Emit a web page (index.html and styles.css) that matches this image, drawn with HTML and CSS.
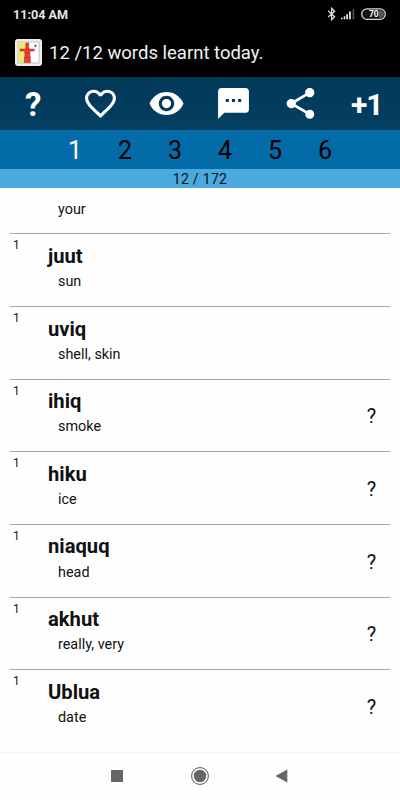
FILE: index.html
```html
<!DOCTYPE html>
<html lang="en">
<head>
<meta charset="utf-8">
<title>Word list</title>
<link rel="stylesheet" href="styles.css">
</head>
<body>
<div class="status">
  <span class="clock">11:04 AM</span>
  <svg class="status-icons" width="62" height="16" viewBox="0 0 62 16">
    <path d="M1.2 4.8 7.6 10.7 4.6 13.7V2.2L7.6 5.2 1.2 11" fill="none" stroke="#ddd" stroke-width="1.3"/>
    <path d="M14 11.8h1.6v1.5H14zM16.7 10.2h1.6v3.1h-1.6zM19.3 8.2h1.7v5.1h-1.7zM22.1 5.5h1.7v7.8h-1.7z" fill="#eee"/>
    <path d="M25.6 3.3h1.6v10h-1.6z" fill="#555"/>
    <rect x="34.7" y="2.8" width="23.6" height="10.6" rx="5.3" fill="#111" stroke="#d8d8d8" stroke-width="1.3"/>
    <path d="M52 4.3h1.2a3.8 3.8 0 0 1 0 7.6H52z" fill="#555"/>
    <text class="battery-text" x="46.8" y="11.2" text-anchor="middle">70</text>
  </svg>
</div>
<div class="title">
  <svg width="27" height="27" viewBox="0 0 27 27">
    <rect width="27" height="27" rx="3" fill="#eee"/>
    <rect x="3" y="3" width="21" height="21" fill="#fff" stroke="#aaa" stroke-width=".7"/>
    <path d="M3.4 3.4H11v20.2H3.4z" fill="#efe96c"/>
    <path d="M10.8 4h3v6h5.4v2h-4l-.4 3 .8 8.6H9.1l.9-8.6-.4-3H5V10h5.8z" fill="#ed3e31" stroke="#ad2722" stroke-width=".5"/>
    <path d="M10 14.5h5.3M9.5 18.5h6M10.5 9.8h3.8" stroke="#ad2722" stroke-width=".6"/>
    <circle cx="20.5" cy="6.7" r="1" fill="#222"/>
  </svg>
  <h1>12 /12 words learnt today.</h1>
</div>
<div class="toolbar">
  <span class="help">?</span>
  <svg class="heart" width="37" height="37" viewBox="0 0 24 24"><path d="M16.5 3c-1.74 0-3.41.81-4.5 2.09C10.91 3.81 9.24 3 7.5 3 4.42 3 2 5.42 2 8.5c0 3.78 3.4 6.86 8.55 11.54L12 21.35l1.45-1.32C18.6 15.36 22 12.28 22 8.5 22 5.42 19.58 3 16.5 3zm-4.4 15.55l-.1.1-.1-.1C7.14 14.24 4 11.39 4 8.5 4 6.5 5.5 5 7.5 5c1.54 0 3.04.99 3.57 2.36h1.87C13.46 5.99 14.96 5 16.5 5c2 0 3.5 1.5 3.5 3.5 0 2.89-3.14 5.74-7.9 10.05z"/></svg>
  <svg width="37" height="37" viewBox="0 0 24 24"><path d="M12 4.5C7 4.5 2.73 7.61 1 12c1.73 4.39 6 7.5 11 7.5s9.27-3.11 11-7.5c-1.73-4.39-6-7.5-11-7.5zM12 17c-2.76 0-5-2.24-5-5s2.24-5 5-5 5 2.24 5 5-2.24 5-5 5zm0-8c-1.66 0-3 1.34-3 3s1.34 3 3 3 3-1.34 3-3-1.34-3-3-3z"/></svg>
  <svg width="37" height="37" viewBox="0 0 24 24"><path d="M20 2H4c-1.1 0-1.99.9-1.99 2L2 22l4-4h14c1.1 0 2-.9 2-2V4c0-1.1-.9-2-2-2zM9 11H7V9h2v2zm4 0h-2V9h2v2zm4 0h-2V9h2v2z"/></svg>
  <svg class="share" width="37" height="37" viewBox="0 0 24 24"><path d="M18 16.08c-.76 0-1.44.3-1.96.77L8.91 12.7c.05-.23.09-.46.09-.7s-.04-.47-.09-.7l7.05-4.11c.54.5 1.25.81 2.04.81 1.66 0 3-1.34 3-3s-1.34-3-3-3-3 1.34-3 3c0 .24.04.47.09.7L8.04 9.81C7.5 9.31 6.79 9 6 9c-1.66 0-3 1.34-3 3s1.34 3 3 3c.79 0 1.5-.31 2.04-.81l7.12 4.16c-.05.21-.08.43-.08.65 0 1.61 1.31 2.92 2.92 2.92s2.92-1.31 2.92-2.92-1.31-2.92-2.92-2.92z"/></svg>
  <span class="plus">+1</span>
</div>
<div class="tabs">
  <span class="active">1</span><span>2</span><span>3</span><span>4</span><span>5</span><span>6</span>
</div>
<div class="count">12 / 172</div>
<div class="list">
  <div class="row partial"><p>your</p></div>
  <div class="row"><i>1</i><div><h2>juut</h2><p>sun</p></div></div>
  <div class="row"><i>1</i><div><h2>uviq</h2><p>shell, skin</p></div></div>
  <div class="row"><i>1</i><div><h2>ihiq</h2><p>smoke</p></div><b>?</b></div>
  <div class="row"><i>1</i><div><h2>hiku</h2><p>ice</p></div><b>?</b></div>
  <div class="row"><i>1</i><div><h2>niaquq</h2><p>head</p></div><b>?</b></div>
  <div class="row"><i>1</i><div><h2>akhut</h2><p>really, very</p></div><b>?</b></div>
  <div class="row"><i>1</i><div><h2>Ublua</h2><p>date</p></div><b>?</b></div>
</div>
<div class="nav">
  <svg width="20" height="20" viewBox="0 0 20 20"><path d="M4 4h12v12H4z"/></svg>
  <svg width="20" height="20" viewBox="0 0 20 20"><circle cx="10" cy="10" r="8.4" fill="none" stroke="#555" stroke-width="1"/><circle cx="10" cy="10" r="6.2"/></svg>
  <svg width="20" height="20" viewBox="0 0 20 20"><path d="M2.5 10 14.3 3.5v13z"/></svg>
</div>
</body>
</html>
```
FILE: styles.css
```css
* { box-sizing: border-box; margin: 0; padding: 0; }
body {
  width: 400px;
  height: 800px;
  display: flex;
  flex-direction: column;
  overflow: hidden;
  background: #fefefe;
  color: #111;
  font-family: Roboto, sans-serif;
}
.status {
  height: 28px;
  flex: none;
  display: flex;
  justify-content: space-between;
  padding: 6px 11px 0 13px;
  background: #000;
}
.clock { color: #e6e6e6; font-size: 12.6px; font-weight: 700; line-height: 18px; }
.battery-text { fill: #fff; font-size: 8.5px; font-weight: 700; }
.title {
  height: 49px;
  flex: none;
  display: flex;
  gap: 7px;
  padding: 11px 0 0 15px;
  background: #000;
}
.title h1 { color: #f2f2f2; font-size: 18.5px; font-weight: 400; line-height: 29px; }
.toolbar {
  height: 53px;
  flex: none;
  display: grid;
  grid-template-columns: repeat(6, 1fr);
  align-items: center;
  justify-items: center;
  background: linear-gradient(#003858, #044063);
  color: #fff;
  fill: #fff;
}
.help { font-size: 33px; font-weight: 700; line-height: 50px; padding-top: 3px; }
.heart { margin-left: 1px; }
.share { margin-left: 1px; }
.plus { font-size: 30px; font-weight: 700; line-height: 50px; padding-top: 3px; letter-spacing: -1px; }
.tabs {
  height: 39px;
  flex: none;
  display: grid;
  grid-template-columns: repeat(6, 50px);
  justify-content: center;
  text-align: center;
  background: #026ba8;
  color: #000;
  font-size: 25px;
  line-height: 41px;
}
.tabs .active { color: #fff; }
.count {
  height: 19px;
  flex: none;
  background: #4aa9dd;
  text-align: center;
  font-size: 14px;
  line-height: 21px;
  letter-spacing: .3px;
}
.list { height: 564px; flex: none; padding: 0 10px; overflow: hidden; }
.row {
  height: 72.65px;
  display: grid;
  grid-template-columns: 38px 1fr 37px;
  border-top: 1px solid #a5a5a5;
}
.row.partial { display: block; height: 45.4px; border: 0; padding: 12.6px 0 0 38px; }
.row i { font-size: 12px; font-style: normal; line-height: 14px; padding: 4px 0 0 3px; }
.row h2 { font-size: 20.2px; font-weight: 700; line-height: 24px; padding-top: 9.5px; height: 38.6px; }
.row p { font-size: 14.4px; line-height: 18px; padding-left: 10px; }
.row b { font-size: 20px; font-weight: 400; line-height: 24px; padding-top: 24.6px; text-align: center; }
.nav {
  flex: 1;
  display: flex;
  justify-content: center;
  align-items: center;
  gap: 63px;
  padding-bottom: 1px;
  border-top: 1px solid #f4f4f4;
  fill: #666;
}
```
